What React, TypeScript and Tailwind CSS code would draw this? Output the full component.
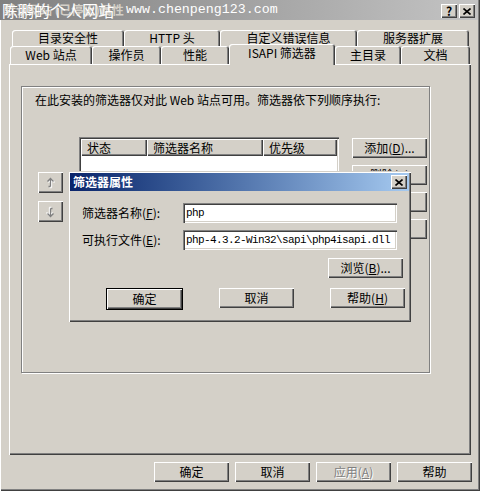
import React from 'react';

const raised = 'shadow-[inset_1px_1px_#fff,inset_-1px_-1px_#404040,inset_-2px_-2px_#808080]';
const sunken = 'shadow-[inset_1px_1px_#808080,inset_2px_2px_#404040,inset_-1px_-1px_#fff,inset_-2px_-2px_#d4d0c8]';
const tabCls =
  'flex items-center justify-center bg-[#d4d0c8] rounded-t-[3px] shadow-[inset_1px_1px_#fff,inset_-1px_0_#404040,inset_-2px_0_#808080]';

function Btn({
  children,
  className = '',
  disabled = false,
}: {
  children: React.ReactNode;
  className?: string;
  disabled?: boolean;
}) {
  return (
    <div
      className={`flex items-center justify-center h-[20px] w-[75px] bg-[#d4d0c8] ${raised} ${
        disabled ? 'text-[#808080] [text-shadow:1px_1px_#fff]' : 'text-black'
      } ${className}`}
    >
      {children}
    </div>
  );
}

function Arrow({ down = false }: { down?: boolean }) {
  return (
    <svg width="9" height="12" viewBox="0 0 9 12" className={down ? 'rotate-180' : ''}>
      <g fill="none" strokeWidth="1.3">
        <path d="M5.5 2.5v8M2.5 5.5l3-3 3 3M5.5 10.5h-2" stroke="#fff" />
        <path d="M4.5 1.5v8M1.5 4.5l3-3 3 3M4.5 9.5h-2" stroke="#808080" />
      </g>
    </svg>
  );
}

function SmallBtn({ children }: { children: React.ReactNode }) {
  return (
    <div className={`w-[16px] h-[14px] bg-[#d4d0c8] ${raised} flex items-center justify-center`}>
      {children}
    </div>
  );
}

function CloseGlyph() {
  return (
    <svg width="8" height="7" viewBox="0 0 8 7">
      <path d="M0.5 0.5l7 6M7.5 0.5l-7 6" stroke="#000" strokeWidth="1.6" />
    </svg>
  );
}

export default function App() {
  const row1 = [
    { t: '目录安全性', w: 112 },
    { t: 'HTTP 头', w: 96 },
    { t: '自定义错误信息', w: 137 },
    { t: '服务器扩展', w: 112 },
  ];
  const row2 = [
    { t: 'Web 站点', w: 82 },
    { t: '操作员', w: 69 },
    { t: '性能', w: 68 },
    { t: 'ISAPI 筛选器', w: 106, sel: true },
    { t: '主目录', w: 66 },
    { t: '文档', w: 69 },
  ];

  return (
    <div className="w-[481px] h-[492px] bg-white font-['Noto_Sans_CJK_SC',sans-serif] text-[12px] leading-none text-black">
      <div className="relative w-[480px] h-[491px] bg-[#d4d0c8] flex flex-col shadow-[inset_1px_0_#fff,inset_-1px_-1px_#404040,inset_-2px_-2px_#808080]">
        {/* title bar */}
        <div className="relative h-[20px] mr-[2px] flex items-center justify-between bg-gradient-to-r from-[#808080] to-[#c4c4c4]">
          <div className="relative h-full flex items-center pl-[4px]">
            <span className="font-bold text-[12px] text-[#d4d0c8]">默认网站 (已停止)属性</span>
            <div className="absolute left-[2px] top-[1px] flex items-center text-white whitespace-nowrap">
              <span className="text-[16px] leading-[18px]">陈鹏的个人网站</span>
              <span className="ml-[12px] font-['Liberation_Mono',monospace] text-[13.3px] leading-[18px]">
                www.chenpeng123.com
              </span>
            </div>
          </div>
          <div className="flex gap-[2px] pr-[3px] pt-[2px]">
            <SmallBtn>
              <span className="font-bold text-[12px] leading-none">?</span>
            </SmallBtn>
            <SmallBtn>
              <CloseGlyph />
            </SmallBtn>
          </div>
        </div>

        {/* tabs + panel */}
        <div className="mt-[10px] px-[9px]">
          <div className="flex h-[16px] -mb-[2px] ml-[3px]">
            {row1.map((r) => (
              <div key={r.t} className={`${tabCls} h-[16px] pb-[1px]`} style={{ width: r.w }}>
                {r.t}
              </div>
            ))}
          </div>
          <div className="relative z-10 flex items-end h-[20px] ml-[1px]">
            {row2.map((r) =>
              r.sel ? (
                <div key={r.t} className={`${tabCls} h-[21px] -mb-px pb-[3px] relative z-10`} style={{ width: r.w }}>
                  {r.t}
                </div>
              ) : (
                <div key={r.t} className={`${tabCls} h-[18px]`} style={{ width: r.w }}>
                  {r.t}
                </div>
              )
            )}
          </div>
          <div className={`h-[391px] w-[462px] ${raised} pt-[22px] pl-[12px]`}>
            {/* group box */}
            <div className="w-[409px] h-[287px] border border-[#808080] shadow-[inset_1px_1px_#fff,1px_1px_#fff] pt-[6px]">
              <div className="pl-[13px] h-[14px] leading-[14px]">
                在此安装的筛选器仅对此 Web 站点可用。筛选器依下列顺序执行:
              </div>
              <div className="flex items-start pl-[16px] mt-[30px]">
                <div className="flex flex-col gap-[8px] mt-[35px] w-[25px]">
                  <div className={`h-[21px] w-[25px] bg-[#d4d0c8] ${raised} flex items-center justify-center`}>
                    <Arrow />
                  </div>
                  <div className={`h-[21px] w-[25px] bg-[#d4d0c8] ${raised} flex items-center justify-center`}>
                    <Arrow down />
                  </div>
                </div>
                <div className={`ml-[16px] w-[260px] h-[140px] bg-white ${sunken} p-[2px]`}>
                  <div className="flex h-[17px] bg-[#d4d0c8]">
                    {[
                      { t: '状态', w: 66 },
                      { t: '筛选器名称', w: 116 },
                      { t: '优先级', w: 74 },
                    ].map((c) => (
                      <div
                        key={c.t}
                        className={`h-full flex items-center pl-[6px] ${raised}`}
                        style={{ width: c.w }}
                      >
                        {c.t}
                      </div>
                    ))}
                  </div>
                </div>
                <div className="ml-[13px] mt-[1px] flex flex-col gap-[7px]">
                  <Btn className="w-[68px]">
                    添加(<u>D</u>)...
                  </Btn>
                  <Btn className="w-[68px]">删除(R)</Btn>
                  <Btn className="w-[68px]">编辑(E)</Btn>
                  <Btn className="w-[68px]">启用(N)</Btn>
                </div>
              </div>
            </div>
          </div>
        </div>

        {/* bottom buttons */}
        <div className="flex justify-end gap-[6px] pr-[8px] mt-[7px]">
          <Btn>确定</Btn>
          <Btn>取消</Btn>
          <Btn disabled>
            应用(<u>A</u>)
          </Btn>
          <Btn>帮助</Btn>
        </div>

        {/* filter properties dialog */}
        <div className="absolute left-[68px] top-[171px] w-[343px] h-[151px] bg-[#d4d0c8] p-[2px] shadow-[inset_1px_1px_#d4d0c8,inset_2px_2px_#fff,inset_-1px_-1px_#404040,inset_-2px_-2px_#808080]">
          <div className="h-[18px] flex items-center justify-between pl-[3px] pr-[2px] bg-gradient-to-r from-[#0a246a] to-[#a6caf0]">
            <span className="font-bold text-white text-[12px]">筛选器属性</span>
            <SmallBtn>
              <CloseGlyph />
            </SmallBtn>
          </div>
          <div className="flex items-center mt-[12px] pl-[12px]">
            <div className="w-[101px]">
              筛选器名称(<u>F</u>):
            </div>
            <div className={`w-[214px] h-[20px] bg-white ${sunken} flex items-center pl-[3px] font-['Liberation_Mono',monospace] text-[11px] tracking-[-0.6px]`}>
              php
            </div>
          </div>
          <div className="flex items-center mt-[7px] pl-[12px]">
            <div className="w-[101px]">
              可执行文件(<u>E</u>):
            </div>
            <div className={`w-[214px] h-[20px] bg-white ${sunken} flex items-center pl-[3px] font-['Liberation_Mono',monospace] text-[11px] tracking-[-0.6px] whitespace-nowrap overflow-hidden`}>
              php-4.3.2-Win32\sapi\php4isapi.dll
            </div>
          </div>
          <div className="flex mt-[8px] pl-[258px]">
            <Btn>
              浏览(<u>B</u>)...
            </Btn>
          </div>
          <div className="flex mt-[10px] pl-[36px] gap-[36px]">
            <div className="border border-black">
              <Btn className="w-[73px] h-[18px]">确定</Btn>
            </div>
            <Btn>取消</Btn>
            <Btn>
              帮助(<u>H</u>)
            </Btn>
          </div>
        </div>
      </div>
    </div>
  );
}
